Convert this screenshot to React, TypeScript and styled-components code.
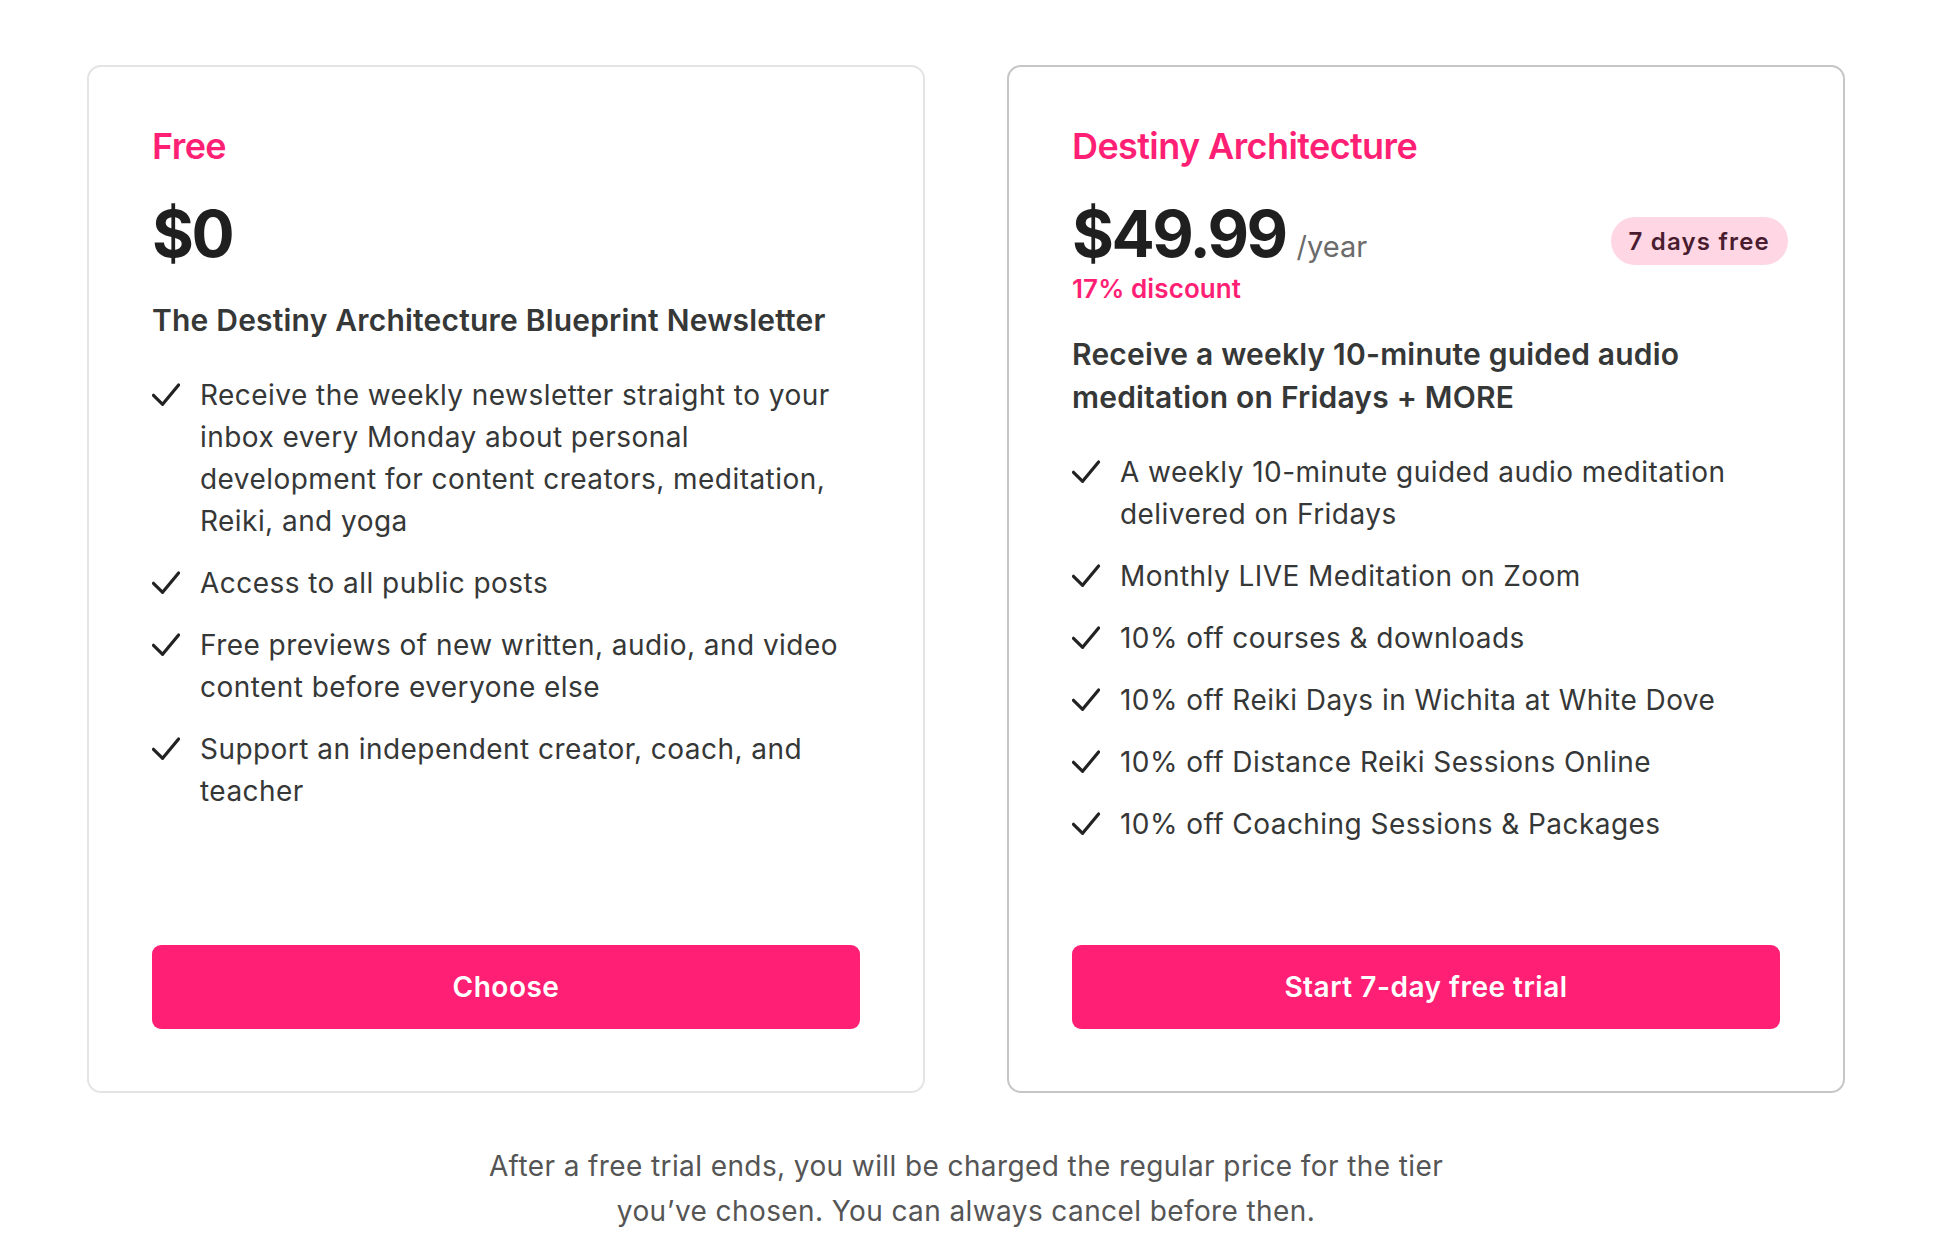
import React from "react";
import styled, { createGlobalStyle } from "styled-components";

const GlobalStyle = createGlobalStyle`
  html, body {
    margin: 0;
    padding: 0;
    background: #ffffff;
  }
  body {
    font-family: Inter, "Noto Sans", "Liberation Sans", sans-serif;
    -webkit-font-smoothing: antialiased;
  }
`;

const PINK = "#ff1f75";
const TEXT = "#363737";

const Page = styled.main`
  padding: 65px 0 40px 87px;
  width: 1758px;
`;

const Cards = styled.div`
  display: grid;
  grid-template-columns: 838px 838px;
  column-gap: 82px;
  align-items: stretch;
`;

const Card = styled.section<{ $selected?: boolean }>`
  box-sizing: border-box;
  display: flex;
  flex-direction: column;
  border: 2px solid ${(p) => (p.$selected ? "#c6c6c6" : "#e4e4e4")};
  border-radius: 14px;
  padding: 57px 63px 62px;
  background: #ffffff;
`;

const Title = styled.h2`
  margin: 0;
  font-size: 36px;
  line-height: 44px;
  font-weight: 600;
  color: ${PINK};
  letter-spacing: -0.6px;
`;

const PriceRow = styled.div`
  display: flex;
  align-items: flex-start;
  margin-top: 28px;
`;

const Price = styled.div`
  display: flex;
  align-items: baseline;
  gap: 11px;
`;

const Amount = styled.span`
  font-size: 64px;
  line-height: 76px;
  font-weight: 700;
  color: #1f1f1f;
  letter-spacing: -2.5px;
`;

const Period = styled.span`
  font-size: 29px;
  font-weight: 400;
  color: #6b6b6b;
`;

const Badge = styled.span`
  margin-left: auto;
  margin-right: -8px;
  margin-top: 21px;
  box-sizing: border-box;
  height: 48px;
  padding: 0 18px;
  border-radius: 24px;
  background: #ffd7e4;
  color: #4a1c2f;
  font-size: 24px;
  font-weight: 600;
  letter-spacing: 1.2px;
  display: flex;
  align-items: center;
`;

const Discount = styled.div`
  font-size: 26px;
  line-height: 34px;
  font-weight: 600;
  color: ${PINK};
  letter-spacing: 0.1px;
`;

const Heading = styled.h3`
  margin: 27px 0 0;
  font-size: 30px;
  line-height: 43px;
  font-weight: 600;
  color: ${TEXT};
  letter-spacing: 0.2px;
`;

const List = styled.ul`
  list-style: none;
  margin: 32px 0 100px;
  padding: 0;
  display: flex;
  flex-direction: column;
  gap: 20px;
`;

const Item = styled.li`
  display: grid;
  grid-template-columns: 48px 1fr;
  font-size: 28px;
  line-height: 42px;
  letter-spacing: 0.45px;
  color: ${TEXT};
`;

const CheckIcon = styled.svg`
  display: block;
  width: 28px;
  height: 24px;
  margin-top: 9px;
  color: #222222;
`;

const ActionButton = styled.button`
  margin-top: auto;
  height: 84px;
  width: 100%;
  border: 0;
  border-radius: 9px;
  background: ${PINK};
  color: #ffffff;
  font-family: inherit;
  font-size: 28px;
  font-weight: 600;
  letter-spacing: 0.5px;
  cursor: pointer;
`;

const FooterRow = styled.div`
  display: flex;
  justify-content: center;
  margin-top: 51px;
`;

const Note = styled.p`
  margin: 0;
  max-width: 1010px;
  text-align: center;
  font-size: 28px;
  line-height: 45px;
  letter-spacing: 0.4px;
  color: #555555;
`;

const Check = () => (
  <CheckIcon viewBox="0 0 28 24" fill="none">
    <path
      d="M1.5 12.3 L10.6 21.3 L26.6 2"
      stroke="currentColor"
      strokeWidth="3.2"
      strokeLinecap="round"
      strokeLinejoin="round"
    />
  </CheckIcon>
);

type Plan = {
  title: string;
  amount: string;
  period?: string;
  badge?: string;
  discount?: string;
  heading: string;
  features: string[];
  cta: string;
  selected?: boolean;
};

const plans: Plan[] = [
  {
    title: "Free",
    amount: "$0",
    heading: "The Destiny Architecture Blueprint Newsletter",
    features: [
      "Receive the weekly newsletter straight to your inbox every Monday about personal development for content creators, meditation, Reiki, and yoga",
      "Access to all public posts",
      "Free previews of new written, audio, and video content before everyone else",
      "Support an independent creator, coach, and teacher",
    ],
    cta: "Choose",
  },
  {
    title: "Destiny Architecture",
    amount: "$49.99",
    period: "/year",
    badge: "7 days free",
    discount: "17% discount",
    heading: "Receive a weekly 10-minute guided audio meditation on Fridays + MORE",
    features: [
      "A weekly 10-minute guided audio meditation delivered on Fridays",
      "Monthly LIVE Meditation on Zoom",
      "10% off courses & downloads",
      "10% off Reiki Days in Wichita at White Dove",
      "10% off Distance Reiki Sessions Online",
      "10% off Coaching Sessions & Packages",
    ],
    cta: "Start 7-day free trial",
    selected: true,
  },
];

export default function App() {
  return (
    <>
      <GlobalStyle />
      <Page>
        <Cards>
          {plans.map((plan) => (
            <Card key={plan.title} $selected={plan.selected}>
              <Title>{plan.title}</Title>
              <PriceRow>
                <Price>
                  <Amount>{plan.amount}</Amount>
                  {plan.period && <Period>{plan.period}</Period>}
                </Price>
                {plan.badge && <Badge>{plan.badge}</Badge>}
              </PriceRow>
              {plan.discount && <Discount>{plan.discount}</Discount>}
              <Heading>{plan.heading}</Heading>
              <List>
                {plan.features.map((f) => (
                  <Item key={f}>
                    <Check />
                    <span>{f}</span>
                  </Item>
                ))}
              </List>
              <ActionButton type="button">{plan.cta}</ActionButton>
            </Card>
          ))}
        </Cards>
        <FooterRow>
          <Note>
            After a free trial ends, you will be charged the regular price for the tier you’ve chosen. You can always cancel before then.
          </Note>
        </FooterRow>
      </Page>
    </>
  );
}
